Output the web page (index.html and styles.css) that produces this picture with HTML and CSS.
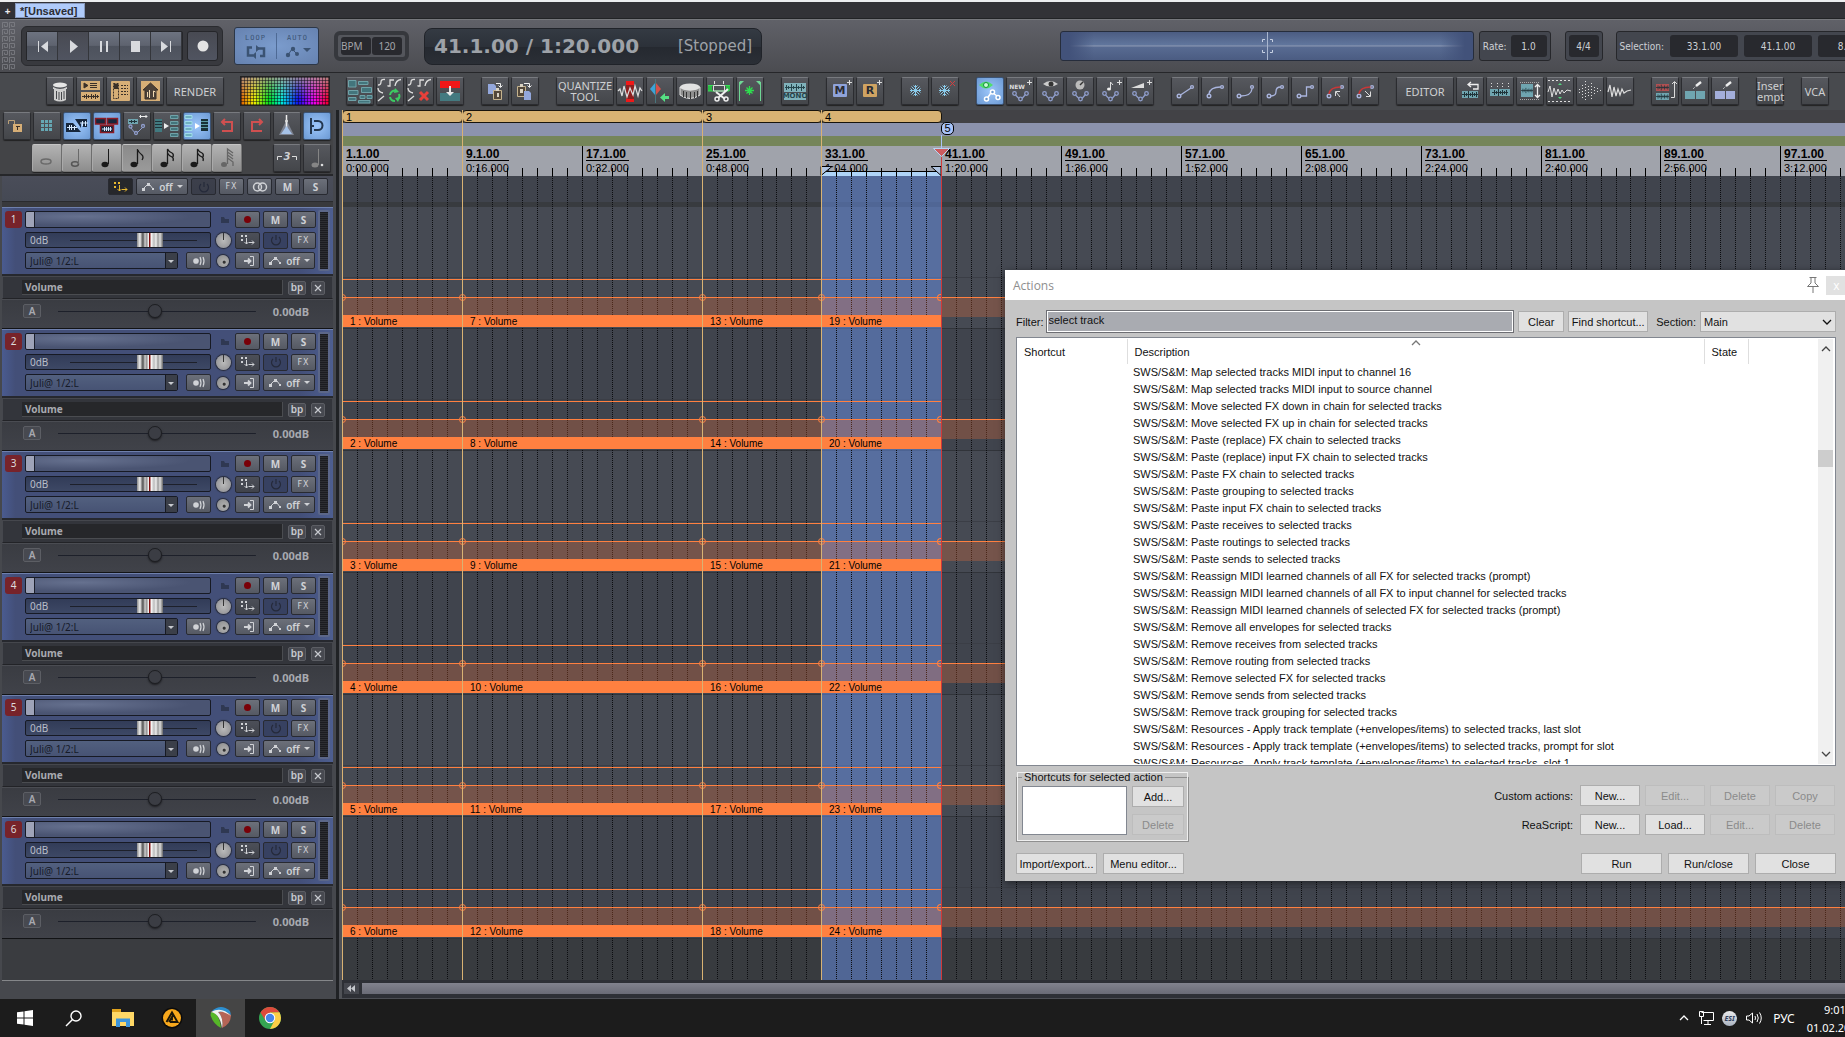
FILE: index.html
```html
<!DOCTYPE html>
<html lang="en">
<head>
    <meta charset="UTF-8">
    <meta name="viewport" content="width=device-width, initial-scale=1.0">
    <title>*[Unsaved]</title>
    <link rel="stylesheet" href="styles.css">
</head>
<body>

<!-- Icon sprite -->
<svg class="sprite" aria-hidden="true">
    <defs>
        <pattern id="key" width="7" height="7" patternUnits="userSpaceOnUse">
            <path d="M0.5 6V0.5H5.5V4.5H2.5V2.5" fill="none" stroke="#85868c"/>
        </pattern>
    </defs>
    <symbol id="env" viewBox="0 0 28 28"><g fill="none" stroke="#8f9dcb" stroke-width="1.3"><path d="M9.500 18 13 21.500M16 21.500 19.500 17.500"/><circle cx="8.500" cy="16.500" r="1.800"/><circle cx="14.500" cy="22" r="1.800"/><circle cx="20.500" cy="16.500" r="1.800"/></g></symbol>
    <symbol id="wave" viewBox="0 0 16 7"><path d="M0 3.500H16M2.500 1V6M4.500 2V5M6.500 0V7M8.500 2V5M10.500 1V6M12.500 2V5M14.500 1V6" stroke="#20343a" fill="none"/></symbol>
    <symbol id="trash" viewBox="0 0 28 28"><ellipse cx="14" cy="8" rx="7" ry="2.500" fill="#e6e6e6"/><path d="M7 10Q14 14 21 10V12H20V23Q14 26 8 23V12H7Z" fill="#cfcfcf"/><path d="M10.500 14V22M13 15V23M15.500 15V23M18 14V22" stroke="#46484c"/></symbol>
    <symbol id="list" viewBox="0 0 28 28"><path d="M5 4H24V13H5ZM5 15H24V24H5Z" fill="#d6ae76"/><path d="M8 6L12 8.500 8 11ZM14 6.500H21M14 8.500H21M14 10.500H21M6 19.500H23M8.500 18V21M10.500 17V22M12.500 18V21M15.500 17V22M17.500 18V21M19.500 17V22M21.500 18V21" stroke="#3a3028" fill="#3a3028"/></symbol>
    <symbol id="mixer" viewBox="0 0 28 28"><rect x="5" y="4" width="19" height="20" rx="1" fill="#d6ae76"/><path d="M7.500 6.500H12.500V21.500H7.500ZM10 7V13M8 10H12M15 8.500H22M15 11.500H22M15 14.500H22M15 17.500H22" stroke="#3a3028" fill="none" stroke-dasharray="2 1"/><rect x="8" y="7" width="4" height="5" fill="#3a3028"/></symbol>
    <symbol id="home" viewBox="0 0 28 28"><rect x="5" y="4" width="19" height="20" fill="#d6ae76"/><path d="M7 13 14.500 6 22 13H20V22H9V13Z" fill="#4a4038" stroke="#3a3028"/><path d="M11.500 15V20M13.500 13V21M17.500 20V14L19.500 15" stroke="#f0d8b0" fill="none"/></symbol>
    <symbol id="blocks" viewBox="0 0 28 28"><path d="M2.500 3.500H10V10H2.500ZM12.500 4.500H22V7.500H12.500ZM15.500 10.500H25.500V15.500H15.500ZM2.500 13.500H12V17.500H2.500ZM14 18.500H19V21.500H14ZM21 18.500H26V21.500H21ZM2.500 20.500H10V23.500H2.500ZM12.500 23.500H24V26H12.500Z" fill="#43757c" stroke="#6fa2a8"/></symbol>
    <symbol id="curves" viewBox="0 0 28 28"><path d="M2 8Q5 8 5 5T9 2.500M12 9.500V9H14V3H18M19 9Q20 3 25 2.500M2 11Q2 15 7 16M2 24 8 19" fill="none" stroke="#dedede" stroke-width="1.300"/></symbol>
    <symbol id="cycle" viewBox="0 0 28 28"><use href="#curves"/><path d="M14 18A5 5 0 0 1 21 14M23 17A5 5 0 0 1 21 23M19 24A5 5 0 0 1 14 20" fill="none" stroke="#3ccb62" stroke-width="2"/><path d="M19 11L23 15 18 16ZM24 20 19 21 22 25Z" fill="#3ccb62"/></symbol>
    <symbol id="curvex" viewBox="0 0 28 28"><use href="#curves"/><path d="M14 15 22 23M22 15 14 23" stroke="#e8403a" stroke-width="3"/></symbol>
    <symbol id="merge" viewBox="0 0 28 28"><path d="M4 4H24V11H4Z" fill="#f01818"/><path d="M4 16H24V24H4Z" fill="#447a80"/><path d="M13 9H15V15H18L14 19 10 15H13Z" fill="#e8e8e8"/></symbol>
    <symbol id="copy" viewBox="0 0 28 28"><path d="M7 7H13L15 9V17H7Z" fill="#93a7dc"/><path d="M12.500 13.500H20.500V22.500H12.500Z" fill="#54483a" stroke="#c5b38e"/><path d="M15 11H18V14H15ZM16 16H18V20H16Z" fill="#d9d2c3"/><path d="M15 6.500H19.500V10M17.500 8.500 19.500 10.500 21.500 8.500" fill="none" stroke="#eee"/></symbol>
    <symbol id="paste" viewBox="0 0 28 28"><path d="M6.500 9.500H14.500V19.500H6.500Z" fill="#54483a" stroke="#c5b38e"/><path d="M9 7H12V10H9ZM9 12H12V16H9Z" fill="#d9d2c3"/><path d="M13 14H18L20 16V23H13Z" fill="#93a7dc"/><path d="M13 6.500H18.500V10M16.500 8.500 18.500 10.500 20.500 8.500" fill="none" stroke="#eee"/></symbol>
    <symbol id="zigred" viewBox="0 0 28 28"><rect x="10" y="4" width="8" height="21" fill="#8c1f1f"/><path d="M10 4H18V8H10ZM10 22H18V25H10Z" fill="#f01818"/><path d="M2 14 4 12 6 19 8 9 11 20 14 11 17 18 19 9 22 19 24 11 26 14" fill="none" stroke="#ddd" stroke-width="1.200"/></symbol>
    <symbol id="diamond" viewBox="0 0 28 28"><path d="M9 6V18L4 12Z" fill="#3ba3d8"/><path d="M10 6V18L15 12Z" fill="#d4514a"/><path d="M9.500 2V26" stroke="#49757c"/><path d="M23 19H19V16L14 20.500 19 25V22H23Z" fill="#55df83"/></symbol>
    <symbol id="drum" viewBox="0 0 28 28"><path d="M4 10Q14 16 24 10V18Q14 25 4 18Z" fill="#8d8d8d" stroke="#e5e5e5"/><ellipse cx="14" cy="10" rx="10" ry="3.500" fill="#e2e2e2"/><path d="M7.500 14V20M10.500 15V21M14.500 15V22M18.500 15V21M21.500 14V20" stroke="#333"/></symbol>
    <symbol id="cut" viewBox="0 0 28 28"><path d="M2 8H6V14H2ZM20 8H24V14H20Z" fill="#2bbd45"/><path d="M2 8.500H24M2 14H23" stroke="#39da58"/><path d="M7.500 8.500H18.500V14H7.500ZM8.500 4V7M17.500 4V7" fill="none" stroke="#ddd"/><path d="M22 12 12 21M10 15 19 22" stroke="#eee" stroke-width="2"/><circle cx="11" cy="22" r="2" fill="none" stroke="#eee" stroke-width="1.500"/><circle cx="20" cy="22" r="2" fill="none" stroke="#eee" stroke-width="1.500"/></symbol>
    <symbol id="star" viewBox="0 0 28 28"><path d="M3.500 24V5H6M24.500 24V5H22" fill="none" stroke="#6fd895"/><path d="M4 4H8L4 8ZM24 4H20L24 8Z" fill="#6fd895"/><path d="M13.500 9V18M9 13.500H18M10.500 10.500 16.500 16.500M16.500 10.500 10.500 16.500" stroke="#2fdc4f" stroke-width="1.300"/></symbol>
    <symbol id="mono" viewBox="0 0 28 28"><path d="M3 6H25V15H3ZM3 16H25V23H3Z" fill="#7fb2bb"/><path d="M4 10.500H24M5.500 8V13M7.500 9V12M10.500 7V14M12.500 9V12M15.500 7V14M17.500 9V12M20.500 7V14M22.500 9V12" stroke="#25454c"/></symbol>
    <symbol id="tile" viewBox="0 0 28 28"><rect x="7" y="7" width="14" height="13" rx="1" fill="currentColor"/><path d="M21 5.500H26M23.500 3V8" stroke="#ddd"/></symbol>
    <symbol id="snow" viewBox="0 0 28 28"><path d="M14.500 8V19M9 13.500H20M10.500 9.500 18.500 17.500M18.500 9.500 10.500 17.500M12.500 8.500 14.500 10.500 16.500 8.500M12.500 18.500 14.500 16.500 16.500 18.500M9.500 11.500 11.500 13.500 9.500 15.500M19.500 11.500 17.500 13.500 19.500 15.500" fill="none" stroke="#8accec"/></symbol>
    <symbol id="snowx" viewBox="0 0 28 28"><use href="#snow" x="-1"/><path d="M19 4 24 9M24 4 19 9" stroke="#d04040"/></symbol>
    <symbol id="eyegreen" viewBox="0 0 28 28"><path d="M3 8Q10 1 17 8 10 15 3 8Z" fill="#4fe06a"/><circle cx="10" cy="8" r="2.500" fill="#caffd5" stroke="#159040"/><path d="M11.500 21 15.500 15 22.500 20" fill="none" stroke="#fff" stroke-width="1.500"/><g fill="#6b9bd2" stroke="#fff" stroke-width="1.500"><circle cx="10.500" cy="22" r="2"/><circle cx="16.500" cy="15" r="2"/><circle cx="22" cy="20.500" r="2"/></g></symbol>
    <symbol id="envnew" viewBox="0 0 28 28"><use href="#env"/><path d="M21 5.500H26M23.500 3V8" stroke="#ddd"/></symbol>
    <symbol id="enveye" viewBox="0 0 28 28"><use href="#env"/><path d="M7 7Q14 1 22 7 14 12 7 7Z" fill="#ccc"/><circle cx="15" cy="7" r="2.500" fill="#333"/></symbol>
    <symbol id="envknob" viewBox="0 0 28 28"><use href="#env"/><circle cx="14" cy="8" r="4.500" fill="#bbb"/><path d="M14 8 17 5" stroke="#333" stroke-width="1.500"/></symbol>
    <symbol id="envnote" viewBox="0 0 28 28"><use href="#env"/><ellipse cx="13" cy="12" rx="2" ry="1.500" fill="#eee"/><path d="M14.500 12V5L17 8M21 5.500H26M23.500 3V8" fill="none" stroke="#ddd"/></symbol>
    <symbol id="envramp" viewBox="0 0 28 28"><use href="#env"/><path d="M5 11 18 6V11Z" fill="#ddd"/><path d="M21 5.500H26M23.500 3V8" stroke="#ddd"/></symbol>
    <symbol id="ends" viewBox="0 0 28 28"><g fill="none" stroke="#a9b4dd" stroke-width="1.400"><circle cx="8" cy="19" r="1.800"/><circle cx="21" cy="10" r="1.400"/></g></symbol>
    <symbol id="c1" viewBox="0 0 28 28"><use href="#ends"/><path d="M9.500 18 20 11" stroke="#a9b4dd" stroke-width="1.300"/></symbol>
    <symbol id="c2" viewBox="0 0 28 28"><use href="#ends"/><path d="M8 17Q9 10 19.500 10" fill="none" stroke="#a9b4dd" stroke-width="1.300"/></symbol>
    <symbol id="c3" viewBox="0 0 28 28"><use href="#ends"/><path d="M10 19Q20 19 21 12" fill="none" stroke="#a9b4dd" stroke-width="1.300"/></symbol>
    <symbol id="c4" viewBox="0 0 28 28"><use href="#ends"/><path d="M10 19Q15 19 15 14.500T19.500 10" fill="none" stroke="#a9b4dd" stroke-width="1.300"/></symbol>
    <symbol id="c5" viewBox="0 0 28 28"><use href="#ends"/><path d="M10 19H15.500V10H19.500" fill="none" stroke="#a9b4dd" stroke-width="1.300"/></symbol>
    <symbol id="c6" viewBox="0 0 28 28"><use href="#ends"/><path d="M8 17Q9 10 19.500 10" fill="none" stroke="#c83838" stroke-width="1.500"/><path d="M19 20 15 15M14.500 19V14.500H19" fill="none" stroke="#ddd"/></symbol>
    <symbol id="c7" viewBox="0 0 28 28"><use href="#ends"/><path d="M8 17Q9 10 19.500 10" fill="none" stroke="#c83838" stroke-width="1.500"/><path d="M14 14 19 19M19.500 14.500V19.500H15" fill="none" stroke="#ddd"/></symbol>
    <symbol id="clip1" viewBox="0 0 28 28"><path d="M6 14H22V21H6Z" fill="#6fa5b0"/><use href="#wave" x="6" y="14" width="16" height="7"/><path d="M15 5 12 7.500 15 10M12 7.500H22V12H17" fill="none" stroke="#eee" stroke-width="1.300"/></symbol>
    <symbol id="clip2" viewBox="0 0 28 28"><path d="M4 12H24V19H4Z" fill="#6fa5b0"/><use href="#wave" x="6" y="12" width="16" height="7"/><path d="M5.500 6V12M11.500 6V12M16.500 6V12M22.500 6V12" stroke="#ddd" stroke-dasharray="1 2"/></symbol>
    <symbol id="clip3" viewBox="0 0 28 28"><path d="M5 7H17V20H5Z" fill="#6fa5b0"/><use href="#wave" x="5" y="10" width="12" height="7"/><path d="M4 5.500H24M4 22.500H24" stroke="#aaa" stroke-dasharray="1 1"/><path d="M21.500 8V20M19 10 21.500 7.500 24 10M19 18 21.500 20.500 24 18" fill="none" stroke="#eee" stroke-width="1.300"/></symbol>
    <symbol id="wav1" viewBox="0 0 28 28"><path d="M2 3.500H25M2 24.500H25" stroke="#ddd" stroke-dasharray="2 2"/><path d="M2 15 4 9 6 20 8 11 10 18 12 12 14 17 16 13 18 16 21 13 25 14" fill="none" stroke="#ddd"/><path d="M12 8 14 6 16 8ZM12 20 14 22 16 20Z" fill="#52d67f"/></symbol>
    <symbol id="wav2" viewBox="0 0 28 28"><path d="M3.500 12V16M6.500 8V21M9.500 4V24M12.500 9V19M15.500 6V22M18.500 10V18M21.500 11V16M24.500 13V15" stroke="#ddd" stroke-dasharray="1 2"/></symbol>
    <symbol id="wav3" viewBox="0 0 28 28"><path d="M2 15 4 8 6 20 8 10 10 19 12 12 14 18 16 12 18 16 21 14 25 13" fill="none" stroke="#ddd" stroke-width="1.200"/></symbol>
    <symbol id="take" viewBox="0 0 28 28"><path d="M5 7H18V14H5Z" fill="#b05052"/><path d="M5 16H18V23H5Z" fill="#6fa5b0"/><use href="#wave" x="5" y="16" width="13" height="7"/><use href="#wave" x="5" y="7" width="13" height="7"/><path d="M20 20.500H23.500V5M21 7 23.500 4.500 26 7" fill="none" stroke="#ddd"/></symbol>
    <symbol id="brush" viewBox="0 0 28 28"><path d="M4 14H14V22H4ZM15 14H24V22H15Z" fill="currentColor"/><path d="M12 12 15 9" stroke="#ddd" stroke-dasharray="1 1"/><path d="M15 9 20 5" stroke="#eee" stroke-width="2.500"/></symbol>
    <symbol id="lock" viewBox="0 0 28 28"><path d="M10 12H19V20H10Z" fill="#d6ae76"/><path d="M5.500 12V8.500H11.500V12" fill="none" stroke="#bba077"/><path d="M13 14.500H17M14.500 14V18" stroke="#3a3028"/></symbol>
    <symbol id="grid" viewBox="0 0 28 28"><path d="M8 8H11V11H8ZM12 8H15V11H12ZM16 8H19V11H16ZM8 12H11V15H8ZM12 12H15V15H12ZM16 12H19V15H16ZM8 16H11V19H8ZM12 16H15V19H12ZM16 16H19V19H16Z" fill="#65a7b3"/></symbol>
    <symbol id="xfade" viewBox="0 0 28 28"><path d="M3 11H10L18 20H3ZM12 7H18V16Z" fill="#17273c"/><path d="M17 7H24V15H20Z" fill="#17273c"/><path d="M4 15.500H14M6.500 13V18M8.500 13V18M11.500 14V18M17 11H25M19.500 9V14M22.500 9V14" stroke="#d4e9ff"/></symbol>
    <symbol id="group" viewBox="0 0 28 28"><path d="M2.500 6.500H12.500V12H2.500ZM14.500 6.500H24.500V12H14.500Z" fill="#17273c" stroke="#8c1c26" stroke-width="1.500"/><path d="M7.500 13.500H20.500V20.500H7.500Z" fill="#17273c" stroke="#8c1c26" stroke-width="1.500"/><path d="M9 17H19M11.500 15V19M13.500 15V19M15.500 15V19M17.500 15V19" stroke="#d4e9ff"/></symbol>
    <symbol id="envmove" viewBox="0 0 28 28"><path d="M5 7H15V12H5Z" fill="#6fa5b0"/><path d="M6 9.500H14M8.500 8V11M11.500 8V11" stroke="#20343a"/><path d="M17 4.500H24M18 3 16.500 4.500 18 6M22.500 3 24 4.500 22.500 6" fill="none" stroke="#eee"/><path d="M8 16 12 21M14 21 20 15" stroke="#8f9dcb"/><g fill="none" stroke="#8f9dcb" stroke-width="1.300"><circle cx="7.500" cy="14.500" r="1.500"/><circle cx="13" cy="21" r="1.500"/><circle cx="20" cy="14" r="1.500"/></g></symbol>
    <symbol id="spread" viewBox="0 0 28 28"><path d="M2 7H9V20H2Z" fill="#417a80"/><path d="M2 9.500H9M2 12.500H9M2 15.500H9" stroke="#20343a"/><path d="M11 11V17L16 14Z" fill="#eee"/><path d="M17.500 3.500H25V6.500H17.500ZM17.500 9.500H25V12.500H17.500ZM17.500 15.500H25V18.500H17.500ZM17.500 21.500H25V24.500H17.500Z" fill="#43757c" stroke="#6fa2a8"/></symbol>
    <symbol id="gather" viewBox="0 0 28 28"><path d="M2 3.500H9V6.500H2ZM2 9.500H9V12.500H2ZM2 15.500H9V18.500H2ZM2 21.500H9V24.500H2Z" fill="#6fb0c0" stroke="#9fdcea"/><path d="M12 11V17L17 14Z" fill="#fff"/><path d="M18 7H25V19H18Z" fill="#183038"/><path d="M18 9.500H25M18 12.500H25M18 15.500H25" stroke="#5c9ba5"/></symbol>
    <symbol id="undo" viewBox="0 0 28 28"><path d="M12 7 9 10 12 13M9 10H19V19H9" fill="none" stroke="#cf5050" stroke-width="2"/></symbol>
    <symbol id="redo" viewBox="0 0 28 28"><path d="M16 7 19 10 16 13M19 10H9V19H19" fill="none" stroke="#cf5050" stroke-width="2"/></symbol>
    <symbol id="metro" viewBox="0 0 28 28"><path d="M13 9 6 23H21L14 9Z" fill="#7d8290"/><path d="M13.500 3V18" stroke="#eee" stroke-width="1.500"/><path d="M8 22 13.500 14 19 22Z" fill="#a6c2e8"/><circle cx="13.500" cy="9" r="1.500" fill="#ddd"/></symbol>
    <symbol id="magnet" viewBox="0 0 28 28"><path d="M8 6V22M11 9H15A4.500 4.500 0 0 1 15 18H11M8 14H11" fill="none" stroke="#23374f" stroke-width="2"/></symbol>
    <symbol id="triplet" viewBox="0 0 28 28"><path d="M4.500 16V12.500H9M19 12.500H23.500V16" fill="none" stroke="#ddd"/></symbol>
    <symbol id="n1" viewBox="0 0 28 28"><ellipse cx="14" cy="17.500" rx="5" ry="2.500" fill="none" stroke="#6a6a6a" stroke-width="1.500"/></symbol>
    <symbol id="n2" viewBox="0 0 28 28"><ellipse cx="13" cy="20" rx="3.500" ry="2.200" fill="none" stroke="#555" stroke-width="1.500"/><path d="M16.500 20V5" stroke="#6a6a6a"/></symbol>
    <symbol id="n4" viewBox="0 0 28 28"><ellipse cx="13" cy="20.500" rx="3.500" ry="2.800" fill="#1a1a1a"/><path d="M16.500 20V5" stroke="#1a1a1a"/></symbol>
    <symbol id="n8" viewBox="0 0 28 28"><ellipse cx="12" cy="20.500" rx="3.500" ry="2.800" fill="#1a1a1a"/><path d="M15.500 20V5Q16 8 20 11 22 13 20 16" fill="none" stroke="#1a1a1a" stroke-width="1.300"/></symbol>
    <symbol id="n16" viewBox="0 0 28 28"><ellipse cx="12" cy="20.500" rx="3.500" ry="2.800" fill="#1a1a1a"/><path d="M15.500 20V5Q17 8 20 9 22 10 21 13M15.500 9Q17 12 20 13 22 14 21 17" fill="none" stroke="#1a1a1a" stroke-width="1.300"/></symbol>
    <symbol id="n64" viewBox="0 0 28 28"><ellipse cx="12" cy="20.500" rx="3" ry="2.500" fill="#666"/><path d="M15.500 20V5L21 9M15.500 8 21 12M15.500 11 21 15M15.500 14 21 18V22" fill="none" stroke="#666" stroke-width="1.300"/></symbol>
    <symbol id="ndot" viewBox="0 0 28 28"><ellipse cx="12" cy="21" rx="3.500" ry="2.500" fill="#858585"/><path d="M15.500 21V5" stroke="#858585"/><circle cx="19" cy="21" r="1.300" fill="#ddd"/></symbol>
    <symbol id="route" viewBox="0 0 24 16"><path d="M5 3H7V5H5ZM9 3H11V5H9ZM5 7H7V9H5Z" fill="currentColor"/><path d="M10.500 6V12M8.500 10 10.500 12 12.500 10M13 10.500H18M16 8.500 18 10.500 16 12.500" fill="none" stroke="currentColor"/></symbol>
    <symbol id="power" viewBox="0 0 24 16"><path d="M12 3V8M9 5A4.500 4.500 0 1 0 15 5" fill="none" stroke="currentColor" stroke-width="1.200"/></symbol>
    <symbol id="auto" viewBox="0 0 16 16"><path d="M3 10 7 6 10 6 13 10" fill="none" stroke="currentColor"/><path d="M2 9H5V12H2ZM7 4H10V7H7ZM12 9H14V11H12Z" fill="currentColor"/></symbol>
    <symbol id="down" viewBox="0 0 8 8"><path d="M1 2H7L4 5Z" fill="currentColor"/></symbol>
    <symbol id="rings" viewBox="0 0 24 16"><circle cx="9.500" cy="8" r="4" fill="none" stroke="currentColor" stroke-width="1.500"/><circle cx="14.500" cy="8" r="4" fill="none" stroke="currentColor" stroke-width="1.500"/></symbol>
    <symbol id="mon" viewBox="0 0 24 16"><circle cx="9" cy="8" r="2.800" fill="currentColor"/><path d="M13 4Q15 8 13 12M16 4Q18 8 16 12" fill="none" stroke="currentColor" stroke-width="1.200"/></symbol>
    <symbol id="input" viewBox="0 0 24 16"><path d="M8 8H14M12 5.500 14.500 8 12 10.500" fill="none" stroke="currentColor" stroke-width="1.800"/><path d="M14 3.500H17.500V12.500H14" fill="none" stroke="currentColor"/></symbol>
    <symbol id="folder" viewBox="0 0 10 8"><path d="M1 1H4L5 3H9V7H1Z" fill="currentColor"/></symbol>
    <symbol id="cross" viewBox="0 0 14 14"><path d="M4 4 10 10M10 4 4 10" stroke="currentColor" stroke-width="1.200"/></symbol>
    <symbol id="caret" viewBox="0 0 12 8"><path d="M2 6 6 2 10 6" fill="none" stroke="currentColor" stroke-width="1.300"/></symbol>
</svg>

<div class="app">
    <div class="tabs">
        <button class="tab-add" aria-label="New tab">+</button>
        <button class="tab">*[Unsaved]</button>
    </div>

    <div class="transport">
        <svg class="grip" width="14" height="49"><rect width="14" height="49" fill="url(#key)"/></svg>
        <div class="play-box">
            <div class="play-group">
                <button class="play" aria-label="Start"><svg width="30" height="28"><path d="M11.500 9V20" stroke="#d8dade"/><path d="M21 9V20L14 14.500Z" fill="#d8dade"/></svg></button>
                <button class="play on" aria-label="Play"><svg width="30" height="28"><path d="M12 8V21L20 14.500Z" fill="#d8dade"/></svg></button>
                <button class="play" aria-label="Pause"><svg width="30" height="28"><path d="M12 9V20M18 9V20" stroke="#d8dade" stroke-width="2"/></svg></button>
                <button class="play" aria-label="Stop"><svg width="30" height="28"><path d="M11 9H20V20H11Z" fill="#d8dade"/></svg></button>
                <button class="play" aria-label="End"><svg width="30" height="28"><path d="M19.500 9V20" stroke="#d8dade"/><path d="M10 9V20L17 14.500Z" fill="#d8dade"/></svg></button>
            </div>
            <button class="play on rec" aria-label="Record"><svg width="30" height="28"><circle cx="15" cy="14" r="5.500" fill="#e4e4e4"/></svg></button>
        </div>
        <div class="loop-box">
            <button class="loop">LOOP<svg width="20" height="14"><path d="M6 2.500H2V10.500H7M14 11H18V3.500H12" fill="none" stroke="#3b5373" stroke-width="2.500"/><path d="M10 0V7L14 3.500ZM10 7V14L6 10.500Z" fill="#3b5373"/></svg></button>
            <button class="loop">AUTO<svg width="26" height="14"><path d="M3 10 7 4 12 9" fill="none" stroke="#3b5373"/><circle cx="3" cy="10" r="2.200" fill="#3b5373"/><circle cx="8" cy="4" r="2.200" fill="#3b5373"/><circle cx="12" cy="9" r="2" fill="#3b5373"/><path d="M18 3H26L22 7Z" fill="#3b5373"/></svg></button>
        </div>
        <div class="bpm-box"><label class="dark" for="bpm">BPM</label><input class="dark" id="bpm" value="120"></div>
        <div class="clock-box"><span class="clock">41.1.00 / 1:20.000</span><span class="status">[Stopped]</span></div>
        <div class="space"></div>
        <div class="scrub">
            <svg width="24" height="28"><path d="M12.500 0V28" stroke="#a9b6cf"/><path d="M7.500 10V7.500H10M15 7.500H17.500V10M7.500 18V20.500H10M15 20.500H17.500V18" fill="none" stroke="#c6d0e2"/></svg>
        </div>
        <div class="info"><label for="rate">Rate:</label><input class="dark w36" id="rate" value="1.0"></div>
        <div class="info sig"><input class="dark w30" aria-label="Time signature" value="4/4"></div>
        <div class="info sel"><label for="selStart">Selection:</label><input class="dark w68" id="selStart" value="33.1.00"><input class="dark w68" aria-label="Selection end" value="41.1.00"><input class="dark w68" aria-label="Selection length" value="8.0.00"></div>
    </div>

    <div class="toolbar" id="toolbar"></div>

    <div class="workspace">
        <div class="left">
            <div class="tools" id="tools"></div>
            <div class="tcp">
                <div class="master">
                    <button class="tb dark-tb yellow" aria-label="Routing"><svg width="24" height="16"><use href="#route"/></svg></button>
                    <button class="tb wide"><svg width="16" height="16"><use href="#auto"/></svg>off<svg width="8" height="8"><use href="#down"/></svg></button>
                    <button class="tb off" aria-label="Power"><svg width="24" height="16"><use href="#power"/></svg></button>
                    <button class="tb fx">FX</button>
                    <button class="tb" aria-label="Mono"><svg width="24" height="16"><use href="#rings"/></svg></button>
                    <button class="tb">M</button>
                    <button class="tb">S</button>
                </div>
                <div class="tcp-band"></div>
                <div id="tracks"></div>
                <div class="tcp-rest"></div>
            </div>
        </div>

        <div class="right">
            <div class="ruler" id="ruler">
                <div class="lane-regions"></div>
                <div class="lane-markers"></div>
                <div class="lane-tempo"></div>
                <div class="lane-time"></div>
            </div>
            <div class="arrange" id="arrange">
                <div class="lane-master"></div>
                <div class="lane-band"></div>
            </div>
            <div class="hscroll">
                <button aria-label="Scroll left"><svg width="14" height="11"><path d="M7 2V9L3 5.500ZM11 2V9L7 5.500Z" fill="#c5c7cc"/></svg></button>
                <div class="hthumb"></div>
            </div>
        </div>
    </div>

    <div class="taskbar">
        <button class="task" aria-label="Start"><svg width="16" height="16"><path d="M0 2.300 6.500 1.400V7.500H0ZM7.500 1.200 16 0V7.500H7.500ZM0 8.500H6.500V14.600L0 13.700ZM7.500 8.500H16V16L7.500 14.800Z" fill="#fff"/></svg></button>
        <button class="task" aria-label="Search"><svg width="18" height="18"><circle cx="11" cy="7" r="5" fill="none" stroke="#fff" stroke-width="1.400"/><path d="M7.500 10.500 1 17" stroke="#fff" stroke-width="1.500"/></svg></button>
        <button class="task" aria-label="Files"><svg width="22" height="18"><path d="M0 0H9V3H22V17H0Z" fill="#e0a21c"/><path d="M0 3H22V17H0Z" fill="#ffd866"/><path d="M4 18V9.500H18V18H14V13H8V18Z" fill="#3d95db"/></svg></button>
        <button class="task" aria-label="Player"><svg width="22" height="22"><circle cx="11" cy="11" r="10.500" fill="#0c0c0c"/><circle cx="11" cy="11" r="9" fill="#f8a81c"/><path d="M5.500 15 11 5.500 16.500 15H9M8 15 11 10V13.500" fill="none" stroke="#1c1608" stroke-width="1.900"/></svg></button>
        <button class="task active" aria-label="Workstation"><svg width="24" height="24"><path d="M3 5Q12-3 21 5L22 9 12 9Z" fill="#2d8fd0"/><path d="M2 6Q10 6 12 22 4 18 1.500 9Z" fill="#56b728"/><path d="M9 6Q16 4 22 9 22 18 13 22 15 12 9 6Z" fill="#b56456"/><path d="M2 6Q13 0 22 10 13 4 9 6 15 12 13 22 11 8 2 6Z" fill="#f2f2ee"/></svg></button>
        <button class="task" aria-label="Browser"><svg width="22" height="22"><circle cx="11" cy="11" r="11" fill="#35a552"/><path d="M1.500 5.500A11 11 0 0 1 20.500 5.500H11L6.500 13.500Z" fill="#de4a3c"/><path d="M20.500 5.500A11 11 0 0 1 11 22L15.500 13.500 13 6Z" fill="#fcce46"/><path d="M11 5.500H20.500L21 7H11Z" fill="#fcce46"/><circle cx="11" cy="11" r="5.200" fill="#fff"/><circle cx="11" cy="11" r="4.200" fill="#4684ea"/></svg></button>
        <div class="space"></div>
        <svg width="12" height="8" class="white"><use href="#caret"/></svg>
        <svg width="16" height="16"><path d="M3.500 2.500H15.500V10.500H5.500M10 11V14M6 14.500H13M1.500 1.500H5.500V6.500H1.500ZM3.500 6.500V14" fill="none" stroke="#fff"/></svg>
        <span class="esi">ESI</span>
        <svg width="18" height="16"><path d="M1.500 6H4L7.500 3V13L4 10H1.500ZM10 6Q11 8 10 10M12 4Q14.500 8 12 12M14.500 2.500Q18 8 14.500 13.500" fill="none" stroke="#fff"/></svg>
        <span class="lang">РУС</span>
        <div class="datetime"><span>9:01</span><span>01.02.2020</span></div>
    </div>
</div>

<!-- Action list window -->
<div class="dialog">
    <div class="dlg-title">
        <span>Actions</span>
        <svg width="14" height="18"><path d="M3.500 1.500H10.500M5 2V7L1.500 10.500H12.500L9 7V2M7 11V17" fill="none" stroke="#777"/></svg>
        <button class="dlg-x" aria-label="Close window">x</button>
    </div>
    <div class="dlg-body">
        <div class="filter-row">
            <label for="filter">Filter:</label>
            <input type="text" id="filter" value="select track">
            <button class="btn">Clear</button>
            <button class="btn w80">Find shortcut...</button>
            <label for="section" class="sec-label">Section:</label>
            <span class="select-wrap"><select id="section"><option>Main</option></select><svg width="12" height="8"><use href="#caret"/></svg></span>
        </div>
        <div class="list">
            <div class="list-view">
                <table>
                    <thead><tr><th class="c-key">Shortcut</th><th class="c-desc">Description<svg width="12" height="8"><use href="#caret"/></svg></th><th class="c-state">State</th><th></th></tr></thead>
                    <tbody id="actions"></tbody>
                </table>
            </div>
            <div class="vscroll"><svg width="12" height="8"><use href="#caret"/></svg><i></i><svg class="flip" width="12" height="8"><use href="#caret"/></svg></div>
        </div>
        <div class="dlg-mid">
            <fieldset>
                <legend>Shortcuts for selected action</legend>
                <div class="keys"></div>
                <div class="key-btns"><button class="btn">Add...</button><button class="btn" disabled>Delete</button></div>
            </fieldset>
            <div class="custom">
                <span>Custom actions:</span><button class="btn">New...</button><button class="btn" disabled>Edit...</button><button class="btn" disabled>Delete</button><button class="btn" disabled>Copy</button>
                <span>ReaScript:</span><button class="btn">New...</button><button class="btn">Load...</button><button class="btn" disabled>Edit...</button><button class="btn" disabled>Delete</button>
            </div>
        </div>
        <div class="dlg-foot">
            <button class="btn w81">Import/export...</button>
            <button class="btn w81">Menu editor...</button>
            <div class="space"></div>
            <button class="btn w81">Run</button>
            <button class="btn w81">Run/close</button>
            <button class="btn w81">Close</button>
        </div>
    </div>
</div>

<script src="script.js"></script>
</body>
</html>
```
FILE: styles.css
```css
/* Base */
*, *::before, *::after {
    box-sizing: border-box;
}
body {
    margin: 0;
    overflow: hidden;
    background-color: #46484d;
    font-family: "Noto Sans", sans-serif;
    font-size: 11px;
    color: #c8cacf;
}
button, input, select {
    font: inherit;
    color: inherit;
    margin: 0;
    padding: 0;
    border: 0;
    border-radius: 0;
    background: none;
}
svg {
    display: block;
    flex: none;
}
.sprite {
    position: absolute;
    width: 0;
    height: 0;
}
.space {
    flex: 1;
}
.app {
    display: flex;
    flex-direction: column;
    height: 100vh;
    border-top: 2px solid #eceef0;
}

/* Project tabs */
.tabs {
    display: flex;
    align-items: stretch;
    height: 17px;
    padding-top: 1px;
    background-color: #323237;
    border-bottom: 1px solid #222326;
}
.tab-add {
    width: 15px;
    font-weight: bold;
    font-size: 10px;
    line-height: 14px;
    color: #eee;
}
.tab {
    padding: 0 7px 0 4px;
    background-color: #b0cbfa;
    border: 1px solid #8799bd;
    color: #2b2d33;
    font: bold 11px/12px "Liberation Sans", sans-serif;
}

/* Transport */
.transport {
    display: flex;
    align-items: center;
    height: 54px;
    padding: 0 0 0 2px;
    overflow: hidden;
    background-image: linear-gradient(#606168, #4b4c51);
    border-top: 1px solid #76777c;
    border-bottom: 1px solid #26272a;
}
.grip {
    opacity: 0.7;
}
.play-box {
    display: flex;
    gap: 4px;
    margin-left: 5px;
    padding: 4px;
    background-color: #38393e;
    border: 1px solid #2a2b2f;
    border-radius: 6px;
}
.play-group {
    display: flex;
    border: 1px solid #25262a;
    border-radius: 2px;
}
.play {
    width: 31px;
    height: 28px;
    border-right: 1px solid #34363b;
    background-image: linear-gradient(#6d7380, #5e636f 48%, #4d525d 50%, #535863);
}
.play.on {
    background-image: linear-gradient(#484a52, #505460);
}
.play.rec {
    height: 30px;
    border: 1px solid #25262a;
    border-radius: 3px;
}
.loop-box {
    display: flex;
    align-items: center;
    width: 85px;
    height: 38px;
    margin-left: 11px;
    background-image: radial-gradient(#7b9ccd, #6682b0);
    border: 1px solid #2c3748;
    border-radius: 3px;
}
.loop {
    flex: 1;
    display: flex;
    flex-direction: column;
    align-items: center;
    gap: 2px;
    font: 7px/10px "DejaVu Sans Mono", monospace;
    letter-spacing: 1px;
    color: #3b5373;
}
.loop + .loop {
    border-left: 1px solid #4e6a95;
}
.dark {
    background-color: #28292e;
    border-radius: 3px;
    color: #b9bbc0;
}
input.dark {
    min-width: 0;
    text-align: center;
}
.bpm-box {
    display: flex;
    gap: 1px;
    margin-left: 15px;
    padding: 2px 3px;
    background-color: #54565c;
    border: 4px solid #36383d;
    border-radius: 6px;
}
.bpm-box .dark {
    width: 30px;
    height: 18px;
    line-height: 18px;
    font-size: 10px;
    color: #a3a5aa;
}
.clock-box {
    display: flex;
    align-items: center;
    justify-content: space-between;
    width: 338px;
    height: 37px;
    margin-left: 15px;
    padding: 0 9px;
    background-image: linear-gradient(#343a43, #2c3139 50%, #252930 51%, #2b2f36);
    border: 1px solid #202329;
    border-radius: 8px;
    font-family: "DejaVu Sans", sans-serif;
    color: #9ea2a8;
}
.clock {
    font-size: 20px;
    font-weight: bold;
}
.status {
    font-size: 15px;
}
.scrub {
    display: flex;
    justify-content: center;
    width: 414px;
    height: 30px;
    background-image: linear-gradient(90deg, #42527a 2%, rgba(96, 117, 158, 0) 8%, rgba(96, 117, 158, 0) 92%, #42527a 98%), linear-gradient(#4b5c82, #60759c 45%, #8794b0 50%, #586b92 54%, #4b5c82);
    border: 1px solid #262d3c;
    border-radius: 3px;
}
.info {
    display: flex;
    align-items: center;
    gap: 4px;
    height: 30px;
    margin-left: 5px;
    padding: 0 3px;
    background-color: #43464e;
    border: 1px solid #26272b;
    border-radius: 3px;
    font: 10px "DejaVu Sans Condensed", sans-serif;
    color: #cdd0d4;
}
.info .dark {
    height: 22px;
    color: #cdd0d4;
}
.w36 { width: 36px; }
.w30 { width: 30px; }
.w68 { width: 68px; }
.info.sig {
    margin-left: 14px;
}
.info.sel {
    gap: 6px;
    flex: none;
    margin-left: 13px;
    margin-right: -45px;
}

/* Icon toolbars */
.toolbar {
    display: flex;
    gap: 15px;
    height: 37px;
    padding: 3px 0 0 45px;
    overflow: hidden;
    background-color: #484a4e;
}
.tgroup {
    display: flex;
    flex: none;
}
.tool {
    position: relative;
    flex: none;
    width: 28px;
    height: 28px;
    margin: 1px;
    background-image: linear-gradient(#56585e, #44464a);
    border: 1px solid #2b2c30;
    border-top-color: #787a7f;
    border-radius: 2px;
    box-shadow: 0 1px 1px #222;
    color: #cfd0d2;
    font-size: 11px;
    line-height: 11px;
}
.tool svg {
    margin: -1px;
}
.tool.w60 {
    width: 58px;
}
.tool.lit {
    background-image: radial-gradient(#9cc6fa, #6c9ad4);
    border-color: #3c5475;
}
.tool.blank {
    visibility: hidden;
}
/* lettering placed over an icon */
.tool b {
    position: absolute;
    left: 0;
    right: 0;
    text-align: center;
    font-family: "DejaVu Sans", sans-serif;
}
.tool .t-mono {
    top: 13px;
    font-size: 7px;
    color: #25454c;
}
.tool .t-tile {
    top: 7px;
    font-size: 11px;
    color: #2a2c34;
}
.tool .t-new {
    top: 3px;
    right: 6px;
    font-size: 6px;
    color: #ddd;
}
.tool .t-three {
    top: 6px;
    font-size: 10px;
    font-style: italic;
}
.palette {
    width: 90px;
    height: 30px;
    border: 1px solid #222;
    background-image: repeating-linear-gradient(90deg, rgba(10, 10, 20, 0.5) 0 1px, transparent 1px 3px), repeating-linear-gradient(rgba(10, 10, 20, 0.5) 0 1px, transparent 1px 3px), linear-gradient(rgba(170, 150, 140, 0.85), transparent 80%), linear-gradient(90deg, #e06000, #f0f000 15%, #00e020 32%, #00e8e0 47%, #1010f0 65%, #f000f0 83%, #f00020);
}
.workspace {
    flex: 1;
    min-height: 0;
    display: grid;
    grid-template-columns: 342px 1fr;
}
.left {
    display: flex;
    flex-direction: column;
    min-height: 0;
    padding-right: 9px;
    background-image: linear-gradient(90deg, transparent 336px, #202225 336px, #202225 339px, #505257 339px);
}
.tools {
    display: grid;
    grid-template-columns: repeat(11, 30px);
    height: 66px;
    padding: 1px 0 0 2px;
    background-color: #434447;
    border-bottom: 2px solid #26272a;
}
.tools .tool.note {
    width: 30px;
    margin: 1px 0;
    background-image: linear-gradient(#b3b3b3, #8d8d8d);
    border-color: #c4c4c4 #777 #777 #aaa;
}
.tools .tool.note.down {
    background-image: linear-gradient(#8a8a8a, #9a9a9a);
}

/* Track panel */
.tcp {
    flex: 1;
    display: flex;
    flex-direction: column;
    min-height: 0;
    margin: 0 0 18px 2px;
    overflow: hidden;
    border-bottom: 1px solid #85878a;
}
.master {
    display: flex;
    align-items: center;
    justify-content: flex-end;
    gap: 3px;
    height: 25px;
    padding: 0 5px 4px 0;
    background-image: linear-gradient(#4a4d59, #454954);
}
.tcp-band {
    height: 6px;
    background-color: #38393c;
    border-top: 1px solid #2a2b2e;
}
.tb {
    flex: none;
    display: flex;
    align-items: center;
    justify-content: center;
    width: 25px;
    height: 17px;
    background-image: linear-gradient(#6c707a, #555963);
    border: 1px solid #282a31;
    border-radius: 2px;
    color: #d0d2d6;
    font-weight: bold;
    font-size: 10px;
    line-height: 14px;
}
.tb.wide {
    width: 52px;
    justify-content: space-between;
    padding: 0 3px;
    font-weight: 600;
}
.tb.fx {
    font: 8px "DejaVu Sans", sans-serif;
    letter-spacing: 1px;
}
.tb.dark-tb {
    background-image: linear-gradient(#4c4f58, #40434b);
}
.tb.yellow {
    background-image: none;
    background-color: #26272b;
    color: #e8b830;
}
.tb.off {
    background-image: none;
    background-color: rgba(30, 34, 48, 0.3);
    color: #252a3a;
}
.track {
    height: 122px;
    border-bottom: 1px solid #121315;
}
.track-main {
    display: grid;
    grid-template-columns: 17px 186px 18px 25px 25px 24px 12px;
    grid-template-rows: 17px 16px 17px;
    column-gap: 3px;
    row-gap: 4px;
    align-items: center;
    height: 69px;
    padding: 3px 3px 6px;
    background-image: linear-gradient(90deg, #4a5b90, #434f78 4%, #434f78 90%, #4d5e90);
    border-top: 1px solid #6f80ad;
    border-bottom: 2px solid #26282e;
}
.track-main > * {
    min-width: 0;
}
.num {
    height: 17px;
    border-radius: 3px;
    background-color: #77232a;
    color: #dcdcdc;
    text-align: center;
    font-size: 10px;
    line-height: 17px;
}
.name, .vol, .in {
    background-image: linear-gradient(#3a4566, #434e6e);
    border: 1px solid #171a24;
    border-radius: 2px;
}
.name {
    height: 17px;
    padding-left: 10px;
    background-image: linear-gradient(90deg, #9ea3b8 8px, #1b1f2c 8px, #1b1f2c 9px, transparent 9px), radial-gradient(at 30% 30%, #66718f, #4a5472 60%);
}
.vol {
    display: flex;
    align-items: center;
    justify-content: space-between;
    height: 16px;
    padding: 0 13px 0 4px;
    background-image: linear-gradient(#323c58, #3d4865);
    font-size: 10px;
    color: #b9bdc8;
}
.vol input, .env-ctl input {
    appearance: none;
    background-image: linear-gradient(#1d202a, #1d202a);
    background-size: 100% 1px;
    background-position: center;
    background-repeat: no-repeat;
}
.vol input {
    width: 127px;
    height: 14px;
}
.vol input::-webkit-slider-thumb {
    appearance: none;
    width: 26px;
    height: 14px;
    background-image: linear-gradient(90deg, #8a8a8a, #f0f0f0 3px, #777 5px, #555 6px, #ccc 8px, #888 10px, #eee 11px, #eee 12px, #801010 12px, #801010 13px, #fff 14px, #bbb 17px, #eee 19px, #999 21px, #ddd 23px, #666);
}
.line3 {
    grid-column: 2;
    display: flex;
    justify-content: space-between;
}
.in {
    display: flex;
    width: 153px;
    height: 17px;
    background-image: linear-gradient(#52607f, #475374);
}
.in select {
    flex: 1;
    appearance: none;
    padding: 0 4px;
    font-size: 10px;
    color: #161a28;
    opacity: 1;
}
.in i {
    width: 12px;
    height: 15px;
    padding-top: 5px;
    background-color: #3b3f49;
    border-left: 1px solid #171a24;
}
.folder {
    margin-left: 6px;
    color: #2f3852;
}
.knob {
    width: 15px;
    height: 15px;
    justify-self: center;
    border-radius: 50%;
    background-image: linear-gradient(90deg, transparent 7px, #333 7px, #333 8px, transparent 8px), radial-gradient(#bbb, #8a8a8e);
    background-size: 100% 7px, 100% 100%;
    background-repeat: no-repeat;
    box-shadow: 0 0 1px 1px #262a38;
}
.knob.small {
    width: 12px;
    height: 12px;
    background-image: radial-gradient(circle at 60% 60%, #333 1px, #aaa 2px, #888);
    background-size: 100% 100%;
}
.dot {
    width: 7px;
    height: 7px;
    border-radius: 50%;
    background-color: #790008;
}
.span2 {
    grid-column: 5 / 7;
}
.meter {
    grid-column: 7;
    grid-row: 1 / 4;
    height: 61px;
    background-image: repeating-linear-gradient(#1c1d20 0 1px, #2d2e31 1px 2px);
    border: 2px solid #5c6788;
    border-radius: 2px;
}
.env-head {
    display: flex;
    align-items: center;
    gap: 5px;
    height: 23px;
    padding: 0 7px 0 19px;
    background-color: #33353b;
    border: 1px solid #45474d;
    border-bottom: 1px solid #222327;
}
.env-name {
    flex: 1;
    height: 15px;
    padding-left: 3px;
    background-color: #26272a;
    border-bottom: 1px solid #4a4c50;
    border-right: 1px solid #4a4c50;
    font-weight: bold;
    font-size: 10px;
    line-height: 14px;
    color: #a8aab0;
}
.env-btn {
    width: 18px;
    height: 14px;
    background-color: #474950;
    border: 1px solid #5c5e64;
    border-radius: 2px;
    font-size: 10px;
    font-weight: 600;
    line-height: 11px;
}
.env-btn.close {
    width: 14px;
}
.env-btn svg {
    margin: -1px;
}
.env-ctl {
    display: flex;
    align-items: center;
    gap: 17px;
    height: 29px;
    padding: 0 24px 6px 21px;
    background-image: linear-gradient(#3a3c42, #404249);
    border-top: 1px solid #4a4c52;
    color: #a8aab0;
    font-size: 11px;
    font-weight: bold;
}
.env-ctl input {
    flex: 1;
    min-width: 0;
    height: 15px;
}
.env-ctl input::-webkit-slider-thumb {
    appearance: none;
    width: 14px;
    height: 14px;
    border-radius: 50%;
    background-color: #3b3d44;
    border: 1px solid #1d1e22;
    box-shadow: 0 1px 2px #1d1e22;
}
.tcp-rest {
    flex: 1;
    background-color: #3a3c40;
}

/* Ruler and arrange view; items sit at their song position */
.right {
    display: flex;
    flex-direction: column;
    min-width: 0;
    min-height: 0;
    position: relative;
    overflow: hidden;
}
.ruler {
    position: relative;
    font: 11px/12px "Liberation Sans", sans-serif;
    color: #000;
}
.lane-regions { height: 13px; background-color: #424246; }
.lane-markers { height: 13px; background-color: #8c93ad; }
.lane-tempo { height: 10px; background-color: #75855a; }
.lane-time { height: 30px; background-color: #a0a3ab; }
.region {
    position: absolute;
    top: 0;
    height: 13px;
    padding-left: 3px;
    background-color: #d8b273;
    border: 1px solid #17130c;
    border-radius: 4px;
}
.marker {
    position: absolute;
    z-index: 2;
    top: 12px;
    width: 13px;
    height: 13px;
    background-color: #a9c3f8;
    border: 1px solid #000;
    border-radius: 5px;
    text-align: center;
    line-height: 11px;
}
.stamp {
    position: absolute;
    top: 38px;
    margin-left: 4px;
}
.stamp b {
    display: block;
    width: 43px;
    height: 13px;
    margin-bottom: 1px;
    border-bottom: 1px solid #000;
    font-size: 12px;
}
.ticks {
    position: absolute;
    left: 0;
    top: 36px;
    width: 100%;
    height: 30px;
}
.range-bar {
    position: absolute;
    top: 61px;
    height: 5px;
    background-color: #afd4f8;
    border-top: 1px solid #000;
}
.arrange {
    flex: 1;
    min-height: 0;
    position: relative;
    overflow: hidden;
    background-color: #383b3f;
}
.lane-master { height: 26px; background-color: #40444d; }
.lane-band { height: 5px; }
.lane {
    position: relative;
    height: 122px;
    padding-top: 70px;
    background-color: #464a53;
    border-bottom: 1px solid #31343a;
}
.lane:nth-child(even) {
    background-color: #40444d;
}
.lane::before {
    content: "";
    display: block;
    border-top: 1px solid #3b3e46;
}
.env-fill {
    position: absolute;
    z-index: 2;
    left: 0;
    right: 0;
    top: 90px;
    height: 20px;
    background-color: rgba(255, 116, 56, 0.26);
    border-top: 1px solid #ff8040;
}
.item {
    position: absolute;
    z-index: 3;
    top: 72px;
    height: 48px;
    border-top: 1px solid #ff8040;
}
.item::before, .item:last-child::after {
    content: "";
    position: absolute;
    left: -3px;
    top: 14px;
    width: 7px;
    height: 7px;
    border: 1px solid #ff8040;
    border-radius: 50%;
}
.item:last-child::after {
    left: auto;
    right: 0;
    width: 4px;
    border-right: 0;
    border-radius: 4px 0 0 4px;
}
.item span {
    position: absolute;
    left: 0;
    right: 0;
    bottom: 0;
    height: 12px;
    padding-left: 8px;
    background-color: #ff8040;
    font: 10px/13px "Liberation Sans", sans-serif;
    color: #000;
}
.range {
    position: absolute;
    z-index: 1;
    top: 0;
    bottom: 0;
    background-color: rgba(104, 146, 236, 0.5);
}
.gridlines {
    position: absolute;
    z-index: 1;
    left: 0;
    top: 0;
    width: 100%;
    height: 100%;
}
.vline {
    position: absolute;
    z-index: 4;
    top: 0;
    bottom: 19px;
    width: 1px;
    background-color: #d8b273;
}
.vline.cursor {
    top: 44px;
    background-color: #d03838;
}
.vline.mark {
    top: 25px;
    bottom: auto;
    height: 20px;
    background-color: #a9c3f8;
}
.head {
    position: absolute;
    z-index: 5;
    top: 38px;
    margin-left: -8px;
}
.hscroll {
    display: flex;
    gap: 3px;
    height: 19px;
    padding: 3px 0 4px 2px;
    background-color: #2e3036;
    border-bottom: 1px solid #4c4e54;
}
.hscroll button {
    width: 15px;
    background-color: #44464d;
}
.hthumb {
    flex: 1;
    background-image: linear-gradient(#82838e, #6a6b76);
}

/* Windows taskbar */
.taskbar {
    display: flex;
    align-items: center;
    gap: 8px;
    height: 38px;
    overflow: hidden;
    background-color: #1c1c1c;
    color: #fff;
    font-size: 12px;
}
.task {
    display: flex;
    align-items: center;
    justify-content: center;
    flex: none;
    width: 49px;
    height: 38px;
    margin-right: -8px;
}
.task.active {
    background-color: #454545;
}
.white {
    color: #fff;
}
.esi {
    width: 15px;
    height: 15px;
    border-radius: 50%;
    background-image: linear-gradient(#ececec, #a9b2c0);
    color: #33425e;
    font-size: 7px;
    font-weight: bold;
    font-style: italic;
    line-height: 15px;
    text-align: center;
}
.lang {
    margin-left: 2px;
    font-size: 12px;
}
.datetime {
    display: flex;
    flex-direction: column;
    align-items: center;
    flex: none;
    margin: 2px -18px 0 4px;
    font-size: 11px;
    line-height: 18px;
}

/* Actions dialog, floats over the arrange view */
.dialog {
    position: absolute;
    z-index: 10;
    left: 1005px;
    right: -2px;
    top: 270px;
    background-color: #c5c5c5;
    box-shadow: 0 2px 8px rgba(0, 0, 0, 0.5);
    font: 11px "Liberation Sans", sans-serif;
    color: #111;
}
.dlg-title {
    display: flex;
    align-items: center;
    gap: 6px;
    height: 30px;
    padding-left: 8px;
    background-color: #fff;
    color: #8e8e8e;
    font: 12px "Open Sans", sans-serif;
}
.dlg-title span {
    flex: 1;
}
.dlg-x {
    width: 21px;
    height: 19px;
    background-color: #e1e1e1;
    color: #fff;
}
.dlg-body {
    padding: 10px 11px 7px;
}
.filter-row {
    display: flex;
    align-items: center;
    gap: 4px;
    height: 23px;
}
.filter-row input {
    flex: 1;
    min-width: 0;
    height: 23px;
    margin-left: -2px;
    padding: 0 2px 4px;
    background-color: #a9abb1;
    border: 1px solid #6d6e73;
    box-shadow: inset 0 0 0 1px #fff;
}
.btn {
    width: 46px;
    height: 21px;
    background-color: #e1e1e1;
    border: 1px solid #adadad;
    font-size: 11px;
}
.btn:disabled {
    background-color: #cacaca;
    border-color: #bdbdbd;
    color: #8b8b8b;
}
.w80 { width: 80px; }
.w81 { width: 81px; }
.sec-label {
    margin-left: 4px;
}
.select-wrap {
    position: relative;
    width: 136px;
    height: 21px;
    background-color: #e1e1e1;
    border: 1px solid #adadad;
}
.select-wrap select {
    width: 100%;
    height: 19px;
    padding: 0 3px;
    appearance: none;
}
.select-wrap svg {
    position: absolute;
    right: 2px;
    top: 6px;
    transform: rotate(180deg);
    pointer-events: none;
}
.list {
    display: flex;
    height: 429px;
    margin-top: 4px;
    padding: 1px 2px 1px 0;
    background-color: #fff;
    border: 1px solid #828790;
}
.list-view {
    flex: 1;
    overflow: hidden;
}
.list table {
    width: 100%;
    border-collapse: collapse;
    table-layout: fixed;
}
.list th {
    position: relative;
    height: 25px;
    padding: 0 7px;
    border-right: 1px solid #dedede;
    font-weight: normal;
    text-align: left;
}
.list th:last-child {
    border-right: 0;
}
.list th svg {
    position: absolute;
    left: 50%;
    top: 0;
    margin-left: -6px;
    color: #777;
}
.c-key { width: 110px; }
.c-desc { width: 577px; }
.c-state { width: 44px; }
.list td {
    height: 17px;
    padding: 0 6px;
    line-height: 17px;
    white-space: nowrap;
}
.vscroll {
    display: flex;
    flex-direction: column;
    justify-content: space-between;
    align-items: center;
    width: 15px;
    padding: 6px 0;
    background-color: #f0f0f0;
    color: #444;
}
.vscroll i {
    width: 15px;
    height: 17px;
    margin-bottom: 187px;
    background-color: #cdcdcd;
}
.flip {
    transform: rotate(180deg);
}
.dlg-mid {
    display: flex;
    justify-content: space-between;
    margin-top: 5px;
}
fieldset {
    display: flex;
    gap: 5px;
    width: 173px;
    height: 71px;
    margin: 0;
    padding: 2px 4px 4px 5px;
    border: 1px solid #8f8f8f;
    outline: 1px solid #efefef;
    outline-offset: -2px;
}
legend {
    padding: 0 2px;
    line-height: 13px;
    white-space: nowrap;
}
.keys {
    flex: 1;
    height: 49px;
    background-color: #fff;
    border: 1px solid #828790;
}
.key-btns {
    display: flex;
    flex-direction: column;
    justify-content: space-between;
    height: 49px;
}
.key-btns .btn {
    width: 52px;
}
.custom {
    display: grid;
    grid-template-columns: auto repeat(4, 60px);
    gap: 8px 5px;
    align-content: start;
    align-items: center;
    padding: 14px 1px 0 0;
    text-align: right;
}
.custom span {
    margin-right: 2px;
}
.custom .btn {
    width: 60px;
    text-align: center;
}
.dlg-foot {
    display: flex;
    gap: 6px;
    margin-top: 11px;
}
```
FILE: script.js
```js
// Toolbars: [icon, extra class, overlaid text, text class]
const toolbar = [
    [["trash"], ["list"], ["mixer"], ["home"], ["", "w60", "RENDER"]],
    "palette",
    [["blocks"], ["cycle"], ["curvex"], ["merge"]],
    [["copy"], ["paste"]],
    [["", "w60", "QUANTIZE TOOL"], ["zigred"], ["diamond"], ["drum"], ["cut"], ["star"]],
    [["mono", "", "MONO", "t-mono"]],
    [["tile:#8fa3da", "", "M", "t-tile"], ["tile:#cfa362", "", "R", "t-tile"]],
    [["snow"], ["snowx"]],
    [["eyegreen", "lit"], ["envnew", "", "NEW", "t-new"], ["enveye"], ["envknob"], ["envnote"], ["envramp"]],
    [["c1"], ["c2"], ["c3"], ["c4"], ["c5"], ["c6"], ["c7"]],
    [["", "w60", "EDITOR"], ["clip1"], ["clip2"], ["clip3"], ["wav1"], ["wav2"], ["wav3"]],
    [["take"], ["brush:#6fa5b0"], ["brush:#a3aedb"]],
    [["", "", "Inser empt"]],
    [["", "", "VCA"]]
];
const tools = [
    ["lock"], ["grid"], ["xfade", "lit"], ["group", "lit"], ["envmove"], ["spread"], ["gather", "lit"], ["undo"], ["redo"], ["metro"], ["magnet", "lit"],
    ["", "blank"], ["n1", "note"], ["n2", "note"], ["n4", "note"], ["n8", "note down"], ["n16", "note"], ["n16", "note"], ["n64", "note"],
    ["", "blank"], ["triplet", "", "3", "t-three"], ["ndot"]
];

function tool([icon, cls = "", text = "", textCls]) {
    const [id, color] = icon.split(":");
    const svg = id ? `<svg width="28" height="28"${color ? ` color="${color}"` : ""}><use href="#${id}"/></svg>` : "";
    const label = textCls ? `<b class="${textCls}">${text}</b>` : text;
    return `<button class="tool ${cls}" aria-label="${text || id}">${svg}${label}</button>`;
}

document.getElementById("toolbar").innerHTML = toolbar.map(g =>
    g === "palette" ? '<div class="palette"></div>' : `<div class="tgroup">${g.map(tool).join("")}</div>`
).join("");
document.getElementById("tools").innerHTML = tools.map(tool).join("");

// Track panels
const icon = (id, w = 24, h = 16) => `<svg width="${w}" height="${h}"><use href="#${id}"/></svg>`;
let panels = "";
for (let n = 1; n <= 6; n++) {
    panels += `
    <div class="track">
        <div class="track-main">
            <span class="num">${n}</span>
            <input class="name" aria-label="Track ${n} name">
            <span class="folder">${icon("folder", 10, 8)}</span>
            <button class="tb" aria-label="Arm"><span class="dot"></span></button>
            <button class="tb">M</button>
            <button class="tb">S</button>
            <div class="meter"></div>
            <span></span>
            <label class="vol">0dB<input type="range" value="66"></label>
            <span class="knob"></span>
            <button class="tb dark-tb" aria-label="Routing">${icon("route")}</button>
            <button class="tb off" aria-label="Power">${icon("power")}</button>
            <button class="tb fx">FX</button>
            <div class="line3">
                <span class="in"><select aria-label="Input"><option>Juli@ 1/2:L</option></select><i>${icon("down", 10, 8)}</i></span>
                <button class="tb" aria-label="Monitor">${icon("mon")}</button>
            </div>
            <span class="knob small"></span>
            <button class="tb" aria-label="Input FX">${icon("input")}</button>
            <button class="tb wide span2">${icon("auto", 16)}off${icon("down", 8, 8)}</button>
        </div>
        <div class="env-head">
            <span class="env-name">Volume</span>
            <button class="env-btn">bp</button>
            <button class="env-btn close" aria-label="Hide envelope">${icon("cross", 14, 14)}</button>
        </div>
        <div class="env-ctl">
            <button class="env-btn">A</button>
            <input type="range" value="49" aria-label="Volume envelope">
            <span>0.00dB</span>
        </div>
    </div>`;
}
document.getElementById("tracks").innerHTML = panels;

// Timeline: bars to pixels
const PX_PER_BAR = 14.9825;
const x = bar => Math.round((bar - 1) * PX_PER_BAR);
const ruler = document.getElementById("ruler");
const arrange = document.getElementById("arrange");
const regions = [[1, 9], [9, 25], [25, 33], [33, 41]];
const bars = Math.ceil(arrange.clientWidth / PX_PER_BAR);

let marks = regions.map(([a, b], i) =>
    `<div class="region" style="left:${x(a)}px;width:${x(b) - x(a) + 1}px">${i + 1}</div>`).join("");
let ticks = "", grid = "";
for (let bar = 1; bar <= bars; bar++) {
    const major = (bar - 1) % 8 === 0;
    const px = x(bar) + 0.5;
    ticks += `M${px} ${major ? 0 : 22}V30`;
    grid += `M${px} 0V2000`;
    if (major) {
        const s = (bar - 1) * 2;
        const time = `${Math.floor(s / 60)}:${String(s % 60).padStart(2, "0")}.000`;
        marks += `<div class="stamp" style="left:${x(bar)}px"><b>${bar}.1.00</b>${time}</div>`;
    }
}
marks += `<div class="marker" style="left:${x(41)}px">5</div>`;
marks += `<div class="range-bar" style="left:${x(33)}px;width:${x(41) - x(33)}px"></div>`;
marks += `<svg class="ticks"><path d="${ticks}" stroke="#000"/>
    <path d="M${x(33)} 20.5h11l-11 9zM${x(41)} 20.5h-10l10 9z" fill="#afc3e0" stroke="#000"/></svg>`;
ruler.insertAdjacentHTML("beforeend", marks);

let lanes = "";
for (let n = 1; n <= 6; n++) {
    const items = regions.map(([a, b], i) =>
        `<div class="item" style="left:${x(a)}px;width:${x(b) - x(a)}px"><span>${n + i * 6} : Volume</span></div>`).join("");
    lanes += `<div class="lane"><div class="env-fill"></div>${items}</div>`;
}
lanes += `<div class="range" style="left:${x(33)}px;width:${x(41) - x(33)}px"></div>`;
lanes += `<svg class="gridlines"><path d="${grid}" stroke="#0c0d10" stroke-dasharray="1 1"/></svg>`;
arrange.insertAdjacentHTML("beforeend", lanes);

const lines = regions.map(([a]) => `<div class="vline" style="left:${x(a)}px"></div>`).join("");
ruler.parentElement.insertAdjacentHTML("beforeend", `${lines}
    <div class="vline mark" style="left:${x(41)}px"></div>
    <div class="vline cursor" style="left:${x(41)}px"></div>
    <svg class="head" style="left:${x(41)}px" width="17" height="10"><path d="M.5 .5H16.500L8.500 8.500Z" fill="#cc5c5f" stroke="#b9d4f2"/></svg>`);

// Action list rows
const actions = [
    "Map selected tracks MIDI input to channel 16",
    "Map selected tracks MIDI input to source channel",
    "Move selected FX down in chain for selected tracks",
    "Move selected FX up in chain for selected tracks",
    "Paste (replace) FX chain to selected tracks",
    "Paste (replace) input FX chain to selected tracks",
    "Paste FX chain to selected tracks",
    "Paste grouping to selected tracks",
    "Paste input FX chain to selected tracks",
    "Paste receives to selected tracks",
    "Paste routings to selected tracks",
    "Paste sends to selected tracks",
    "Reassign MIDI learned channels of all FX for selected tracks (prompt)",
    "Reassign MIDI learned channels of all FX to input channel for selected tracks",
    "Reassign MIDI learned channels of selected FX for selected tracks (prompt)",
    "Remove all envelopes for selected tracks",
    "Remove receives from selected tracks",
    "Remove routing from selected tracks",
    "Remove selected FX for selected tracks",
    "Remove sends from selected tracks",
    "Remove track grouping for selected tracks",
    "Resources - Apply track template (+envelopes/items) to selected tracks, last slot",
    "Resources - Apply track template (+envelopes/items) to selected tracks, prompt for slot",
    "Resources - Apply track template (+envelopes/items) to selected tracks, slot 1"
];
document.getElementById("actions").innerHTML = actions.map(a =>
    `<tr><td></td><td>SWS/S&amp;M: ${a}</td><td></td><td></td></tr>`).join("");
```
